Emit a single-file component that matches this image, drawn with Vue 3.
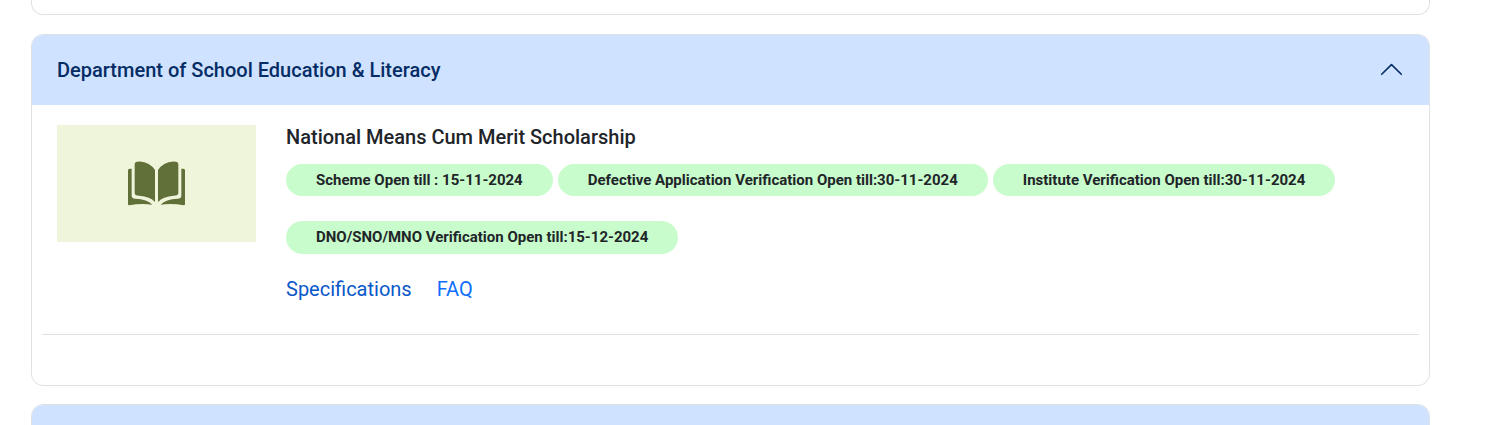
<script setup>
const pills = [
  'Scheme Open till : 15-11-2024',
  'Defective Application Verification Open till:30-11-2024',
  'Institute Verification Open till:30-11-2024',
  'DNO/SNO/MNO Verification Open till:15-12-2024',
]
</script>

<template>
  <main class="page">
    <section class="card previous"></section>

    <section class="card current">
      <header class="head">
        <span class="dept">Department of School Education &amp; Literacy</span>
        <svg class="chevron" width="22" height="14" viewBox="0 0 22 14" fill="none">
          <path d="M1.7 11.3L11.5 1.6L21.300 11.3" stroke="#052c65" stroke-width="1.6" stroke-linecap="round" stroke-linejoin="round" />
        </svg>
      </header>
      <div class="body">
        <article class="scheme">
          <div class="thumb">
            <svg class="book" width="57" height="45" viewBox="0 0 171 135" fill="#616f39">
              <path d="M20 9Q20 3 27 2Q46 -1 62 9Q74 16 81 27V123Q66 106 34 104Q20 104 20 97Z" />
              <path d="M151 9Q151 3 144 2Q125 -1 109 9Q97 16 90 27V123Q105 106 137 104Q151 104 151 97Z" />
              <path d="M0 28Q0 23 5 23H11V104Q11 113 22 113Q58 114 73 131Q38 126 4 133Q0 133 0 130Z" />
              <path d="M171 28Q171 23 166 23H160V104Q160 113 149 113Q113 114 98 131Q133 126 167 133Q171 133 171 130Z" />
            </svg>
          </div>
          <div class="info">
            <h2 class="title">National Means Cum Merit Scholarship</h2>
            <div class="pills">
              <span v-for="pill in pills" :key="pill" class="pill">{{ pill }}</span>
            </div>
            <nav class="links">
              <a class="link visited">Specifications</a>
              <a class="link">FAQ</a>
            </nav>
          </div>
        </article>
      </div>
    </section>

    <section class="card next">
      <header class="head"></header>
    </section>
  </main>
</template>

<style>
body {
  margin: 0;
  background: #fff;
}
</style>

<style scoped>
.page {
  box-sizing: border-box;
  height: 425px;
  padding: 0 68px 0 31px;
  overflow: hidden;
  font-family: Roboto, sans-serif;
  color: #212529;
}
.card {
  box-sizing: border-box;
  border: 1px solid #dee2e6;
  border-radius: 12px;
  overflow: hidden;
}
.previous {
  height: 15px;
  border-top: 0;
  border-radius: 0 0 12px 12px;
  margin-bottom: 19px;
}
.current {
  height: 352px;
  margin-bottom: 18px;
}
.next {
  height: 72px;
}
.head {
  box-sizing: border-box;
  height: 70px;
  padding: 0 27px 0 25px;
  display: flex;
  align-items: center;
  justify-content: space-between;
  background: #cfe2ff;
}
.dept {
  color: #052c65;
  font-size: 20px;
  font-weight: 500;
  line-height: 24px;
}
.body {
  padding: 0 10px;
}
.scheme {
  box-sizing: border-box;
  height: 230px;
  padding: 20px 15px 0;
  display: flex;
  gap: 30px;
  border-bottom: 1px solid #dee2e6;
}
.thumb {
  flex: none;
  width: 199px;
  height: 117px;
  display: flex;
  align-items: center;
  justify-content: center;
  background: #eff5da;
}
.chevron {
  overflow: visible;
}
.info {
  flex: 1;
}
.title {
  margin: 0 0 15px;
  font-size: 20px;
  font-weight: 500;
  line-height: 24px;
}
.pills {
  display: flex;
  flex-wrap: wrap;
  gap: 25px 5px;
}
.pill {
  box-sizing: border-box;
  height: 32px;
  padding: 0 30px;
  border-radius: 17px;
  background: #c9fccc;
  font-size: 15px;
  font-weight: 700;
  line-height: 32px;
  white-space: nowrap;
}
.pill:last-child {
  height: 33px;
}
.links {
  display: flex;
  gap: 25px;
  margin-top: 23px;
}
.link {
  color: #0d6efd;
  font-size: 20px;
  line-height: 24px;
}
.visited {
  color: #0a58ca;
}
</style>
